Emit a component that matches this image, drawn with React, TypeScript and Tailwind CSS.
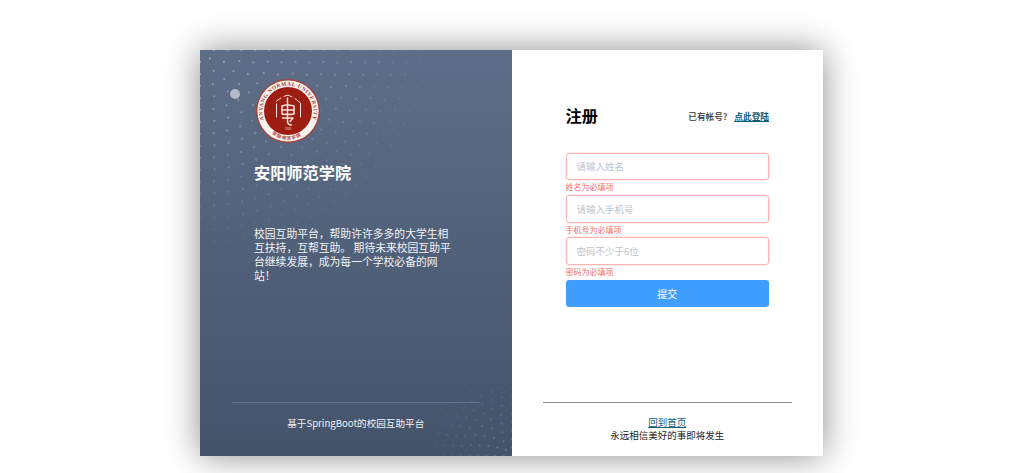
const cjk = "font-['Microsoft_YaHei','Noto_Sans_CJK_SC','Noto_Sans',sans-serif]";

// halftone dots fading away from a corner
function Dots({ corner }: { corner: "tl" | "br" }) {
  const dots = [];
  const rings = corner === "tl" ? 17 : 10;
  for (let ring = 1; ring < rings; ring++) {
    const r = ring * (corner === "tl" ? 12 : 10);
    const count = Math.max(2, Math.round(r / 8));
    for (let i = 0; i <= count; i++) {
      const a = (i / count) * (Math.PI / 2);
      const x = corner === "tl" ? r * Math.cos(a) * 1.15 : 312 - r * Math.cos(a) * 0.85;
      const y = corner === "tl" ? r * Math.sin(a) : 406 - r * Math.sin(a) * 0.85;
      const fade = 1 - ring / rings;
      dots.push(<circle key={ring + "-" + i} cx={x} cy={y} r={1.15} fill="#fff" opacity={(corner === "tl" ? 0.32 : 0.15) * fade + 0.04} />);
    }
  }
  return (
    <svg className="absolute inset-0" width="312" height="406" viewBox="0 0 312 406">
      {dots}
    </svg>
  );
}

function Seal() {
  return (
    <svg width="66" height="66" viewBox="0 0 66 66">
      <defs>
        <path id="seal-top" d="M 9 41.7 A 25.5 25.5 0 1 1 57 41.7" />
        <path id="seal-bottom" d="M 8 40 A 26 30 0 0 0 58 40" />
      </defs>
      <circle cx="33" cy="33" r="32" fill="#a8423a" />
      <circle cx="33" cy="33" r="30.6" fill="#f9f3f0" />
      <circle cx="33" cy="33" r="24" fill="#9e1d13" />
      <text fontSize="5.4" fontWeight="700" fill="#a63a30" fontFamily="Liberation Serif, serif">
        <textPath href="#seal-top" textLength="97">ANYANG NORMAL UNIVERSITY</textPath>
      </text>
      <text fontSize="4.4" fontWeight="700" fill="#a63a30" fontFamily="Noto Sans CJK SC, sans-serif" letterSpacing="1">
        <textPath href="#seal-bottom" startOffset="18">安阳师范学院</textPath>
      </text>
      <g fill="none" stroke="#f4e3dc" strokeLinecap="round" strokeLinejoin="round">
        <path d="M21.5 39 V26 M21.5 23 L26 20 M29 18.4 L33 17 L37 19 M40 20.5 L45.5 25 V39" strokeWidth="1" />
        <path d="M27 28 Q32 26 39 28 V36 Q33 37 27 36 Z" strokeWidth="1.5" />
        <path d="M32.5 20 V44 Q33 47 36.5 47 M27.5 40 H38 L35 43.5 M27 32 H39" strokeWidth="1.5" />
      </g>
      <text x="33" y="52" textAnchor="middle" fontSize="2.8" fill="#e8cfc8" fontFamily="Liberation Sans, sans-serif">1958</text>
    </svg>
  );
}

export default function App() {
  return (
    <div className={`h-[473px] w-full overflow-hidden bg-white pt-[50px] pl-[200px] ${cjk}`}>
      <div className="flex h-[406px] w-[623px] shadow-[0_0_32px_rgba(0,0,0,0.45)]">
        <div className="relative flex w-[311.5px] flex-col bg-gradient-to-b from-[#5f6e88] to-[#43536a] text-white">
          <Dots corner="tl" />
          <Dots corner="br" />
          <div className="absolute top-[39px] left-[30px] h-[10px] w-[10px] rounded-full bg-[#b4bac5]" />
          <div className="relative pt-[27.5px] pl-[54.5px]">
            <Seal />
          </div>
          <h1 className="relative mt-[16px] pl-[54px] text-[16.2px] leading-[24px] font-bold">安阳师范学院</h1>
          <p className="relative mt-[42px] w-[254px] pl-[54px] text-[10.8px] leading-[14.2px] text-[#f0f2f5]">
            校园互助平台，帮助许许多多的大学生相互扶持，互帮互助。 期待未来校园互助平台继续发展，成为每一个学校必备的网站！
          </p>
          <div className="relative mx-[32px] mt-auto border-t border-[#66748a]" />
          <p className="relative pt-[13px] pb-[26px] text-center text-[9.6px] leading-[14px] text-[#f0f2f5]">
            基于SpringBoot的校园互助平台
          </p>
        </div>
        <div className="flex flex-1 flex-col bg-white">
          <div className="mx-[54px] flex items-center justify-between pt-[53px]">
            <h2 className="text-[16.2px] leading-[24px] font-bold text-black">注册</h2>
            <p className="mt-[4px] text-[8.7px] leading-[12px] font-medium text-[#333]">
              已有帐号?<a className="ml-[7px] font-bold text-[#0b5c7d] underline">点此登陆</a>
            </p>
          </div>
          <form className="mx-[54px] mt-[25.7px] flex flex-col">
            {[
              ["请输入姓名", "姓名为必填项"],
              ["请输入手机号", "手机号为必填项"],
              ["密码不少于6位", "密码为必填项"],
            ].map(([holder, error]) => (
              <div key={holder} className="flex h-[42.4px] flex-col">
                <input
                  placeholder={holder}
                  className="h-[27.6px] w-full rounded-[3px] border border-[#ffb3b3] px-[10px] text-[9.5px] shadow-[0_0_0_0.5px_#ffdcdc] outline-none placeholder:text-[#c0c4cc]"
                />
                <span className="text-[8px] leading-[13px] text-[#f56c6c]">{error}</span>
              </div>
            ))}
            <button type="button" className="h-[27px] rounded-[3px] bg-[#409eff] text-[10px] text-white">
              提交
            </button>
          </form>
          <div className="mx-[31px] mt-auto border-t border-[#8c8c8c]" />
          <div className="pt-[13px] pb-[14px] text-center text-[9.5px] leading-[13px] text-[#222]">
            <a className="block text-[#0b5c7d] underline">回到首页</a>
            <p>永远相信美好的事即将发生</p>
          </div>
        </div>
      </div>
    </div>
  );
}
